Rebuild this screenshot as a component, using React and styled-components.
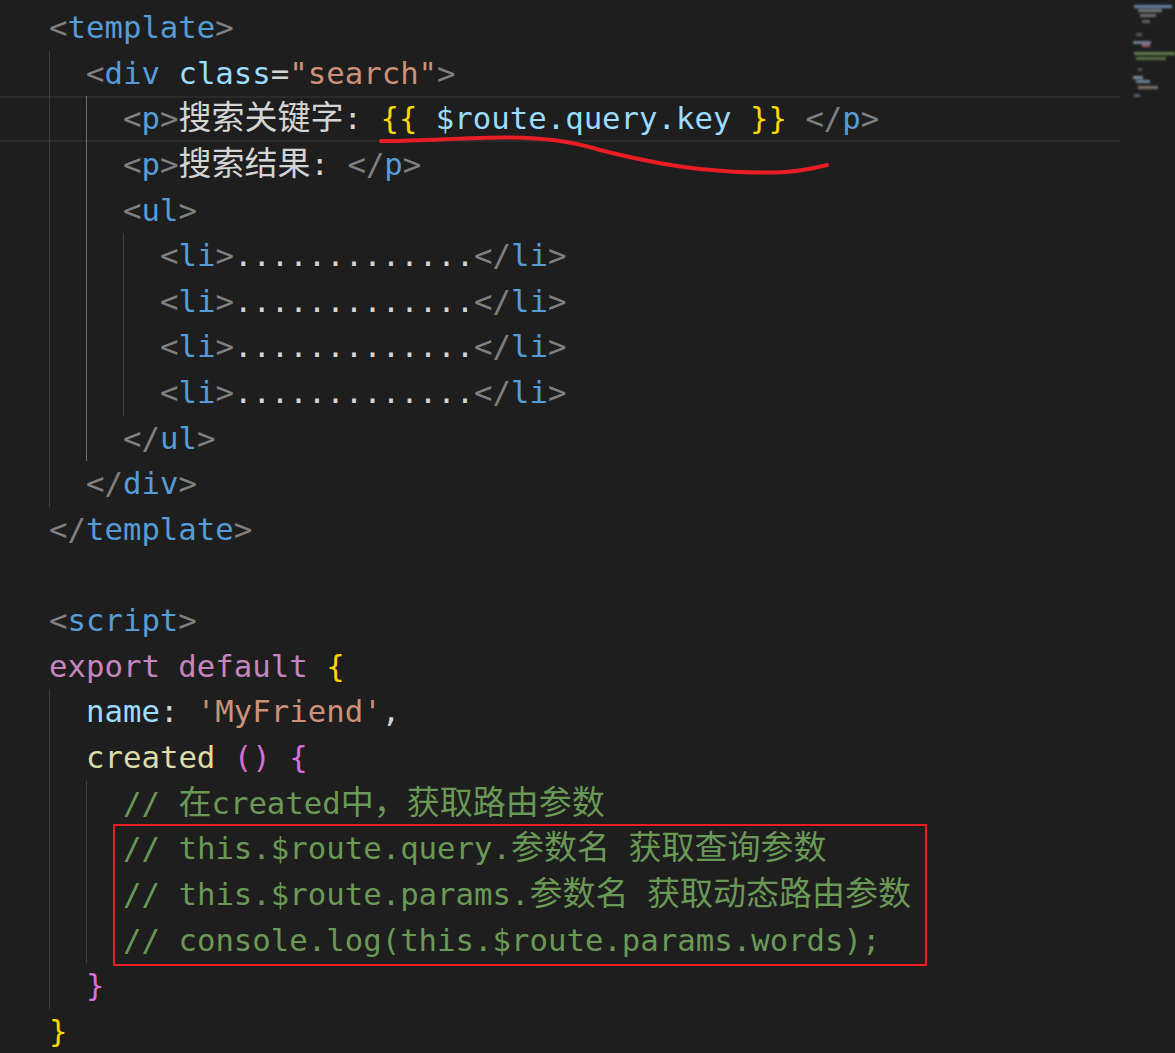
import React from "react";
import styled, { createGlobalStyle } from "styled-components";

const GlobalStyle = createGlobalStyle`
  html, body {
    margin: 0;
    padding: 0;
    background: #1e1e1e;
  }
  #root {
    width: 100vw;
    height: 100vh;
  }
`;

const LINE_H = 45.64;
const COL = 18.5;

const C = {
  punc: "#808080",
  tag: "#569cd6",
  attr: "#9cdcfe",
  eq: "#d4d4d4",
  str: "#ce9178",
  text: "#d4d4d4",
  brace: "#ffd700",
  vari: "#9cdcfe",
  kw: "#c586c0",
  fn: "#dcdcaa",
  paren: "#da70d6",
  cmt: "#6a9955",
};

const Editor = styled.div`
  position: relative;
  display: flex;
  width: 100vw;
  height: 100vh;
  overflow: hidden;
  background: #1e1e1e;
`;

const CodeArea = styled.div`
  flex: 1;
  padding-top: 5px;
  font-family: "DejaVu Sans Mono", "Liberation Mono", monospace;
  font-size: 30.7px;
  color: #d4d4d4;
`;

const Line = styled.div`
  display: flex;
  height: ${LINE_H}px;
  line-height: ${LINE_H}px;
  padding-left: 49px;
  white-space: pre;
  box-shadow: ${(p) =>
    p.$active ? "inset 0 2px 0 #2a2a2a, inset 0 -2px 0 #2a2a2a" : "none"};
`;

const Indent = styled.span`
  flex: none;
  width: ${COL * 2}px;
  box-shadow: inset 1px 0 0 ${(p) => (p.$bright ? "#6e6e6e" : "#404040")};
`;

const Code = styled.span`
  flex: none;
`;

const Tok = styled.span`
  color: ${(p) => p.$c};
`;

const Cjk = styled.span`
  font-family: "Noto Sans CJK SC", sans-serif;
  font-size: 33px;
  line-height: 1;
`;

const Minimap = styled.div`
  flex: none;
  width: 55px;
  height: 100%;
`;

const Box = styled.div`
  position: absolute;
  left: 113px;
  top: 824px;
  width: 814px;
  height: 142px;
  box-sizing: border-box;
  border: 2px solid #ea1c24;
  pointer-events: none;
`;

const Scribble = styled.svg`
  position: absolute;
  left: 0;
  top: 0;
  pointer-events: none;
`;

const CJK_RE = /([\u3000-\u303f\u4e00-\u9fff\uff00-\uffef]+)/;

function renderText(text) {
  return text.split(CJK_RE).map((part, i) =>
    i % 2 === 1 ? <Cjk key={i}>{part}</Cjk> : part
  );
}

const open = (name) => [
  ["punc", "<"],
  ["tag", name],
];
const close = (name) => [
  ["punc", "</"],
  ["tag", name],
  ["punc", ">"],
];

const lines = [
  { indent: 0, t: [...open("template"), ["punc", ">"]] },
  {
    indent: 1,
    t: [
      ...open("div"),
      ["text", " "],
      ["attr", "class"],
      ["eq", "="],
      ["str", '"search"'],
      ["punc", ">"],
    ],
  },
  {
    indent: 2,
    active: true,
    t: [
      ...open("p"),
      ["punc", ">"],
      ["text", "搜索关键字: "],
      ["brace", "{{"],
      ["text", " "],
      ["vari", "$route.query.key"],
      ["text", " "],
      ["brace", "}}"],
      ["text", " "],
      ...close("p"),
    ],
  },
  {
    indent: 2,
    t: [...open("p"), ["punc", ">"], ["text", "搜索结果: "], ...close("p")],
  },
  { indent: 2, t: [...open("ul"), ["punc", ">"]] },
  ...[0, 1, 2, 3].map(() => ({
    indent: 3,
    t: [...open("li"), ["punc", ">"], ["text", "............."], ...close("li")],
  })),
  { indent: 2, t: close("ul") },
  { indent: 1, t: close("div") },
  { indent: 0, t: close("template") },
  { indent: 0, t: [] },
  { indent: 0, t: [...open("script"), ["punc", ">"]] },
  {
    indent: 0,
    t: [
      ["kw", "export default"],
      ["text", " "],
      ["brace", "{"],
    ],
  },
  {
    indent: 1,
    t: [
      ["attr", "name"],
      ["text", ": "],
      ["str", "'MyFriend'"],
      ["text", ","],
    ],
  },
  {
    indent: 1,
    t: [
      ["fn", "created"],
      ["text", " "],
      ["paren", "()"],
      ["text", " "],
      ["paren", "{"],
    ],
  },
  { indent: 2, t: [["cmt", "// 在created中，获取路由参数"]] },
  { indent: 2, t: [["cmt", "// this.$route.query.参数名 获取查询参数"]] },
  { indent: 2, t: [["cmt", "// this.$route.params.参数名 获取动态路由参数"]] },
  { indent: 2, t: [["cmt", "// console.log(this.$route.params.words);"]] },
  { indent: 1, t: [["paren", "}"]] },
  { indent: 0, t: [["brace", "}"]] },
];

function MinimapArt() {
  const bars = [
    { y: 5, x: 14, w: 38, c: "#7fa8d8" },
    { y: 9, x: 18, w: 24, c: "#9a9a9a" },
    { y: 14, x: 20, w: 16, c: "#8a8a8a" },
    { y: 20, x: 22, w: 8, c: "#7a7a7a" },
    { y: 33, x: 16, w: 6, c: "#6a6a6a" },
    { y: 41, x: 13, w: 18, c: "#8aa0c0" },
    { y: 44, x: 22, w: 8, c: "#c07080" },
    { y: 52, x: 14, w: 41, c: "#7e9f5e" },
    { y: 57, x: 16, w: 30, c: "#6f8f55" },
    { y: 68, x: 18, w: 4, c: "#707070" },
    { y: 76, x: 13, w: 10, c: "#9ab8d8" },
    { y: 80, x: 16, w: 14, c: "#8aa8c8" },
    { y: 86, x: 18, w: 20, c: "#a09080" },
    { y: 94, x: 14, w: 6, c: "#6a7a8a" },
  ];
  return (
    <svg width="55" height="110" viewBox="0 0 55 110">
      <defs>
        <filter id="mmblur" x="-20%" y="-50%" width="140%" height="200%">
          <feGaussianBlur stdDeviation="0.9" />
        </filter>
      </defs>
      <g filter="url(#mmblur)" opacity="0.75">
        {bars.map((b, i) => (
          <rect key={i} x={b.x} y={b.y} width={b.w} height="3" fill={b.c} />
        ))}
      </g>
    </svg>
  );
}

export default function App() {
  return (
    <>
      <GlobalStyle />
      <Editor>
        <CodeArea>
          {lines.map((ln, i) => (
            <Line key={i} $active={ln.active}>
              {Array.from({ length: ln.indent }).map((_, k) => (
                <Indent key={k} $bright={i <= 11 && k === 1} />
              ))}
              <Code>
                {ln.t.map(([kind, text], j) => (
                  <Tok key={j} $c={C[kind]}>
                    {renderText(text)}
                  </Tok>
                ))}
              </Code>
            </Line>
          ))}
        </CodeArea>
        <Minimap>
          <MinimapArt />
        </Minimap>
        <Scribble width="1175" height="1053" viewBox="0 0 1175 1053">
          <path
            d="M381,141 C420,141.5 470,137 510,137.5 C545,138 570,141 600,150 C640,160 670,166 700,169 C730,172 760,173.5 785,172 C800,171 815,168 827,165"
            fill="none"
            stroke="#ea1c24"
            strokeWidth="4"
            strokeLinecap="round"
          />
        </Scribble>
        <Box />
      </Editor>
    </>
  );
}
